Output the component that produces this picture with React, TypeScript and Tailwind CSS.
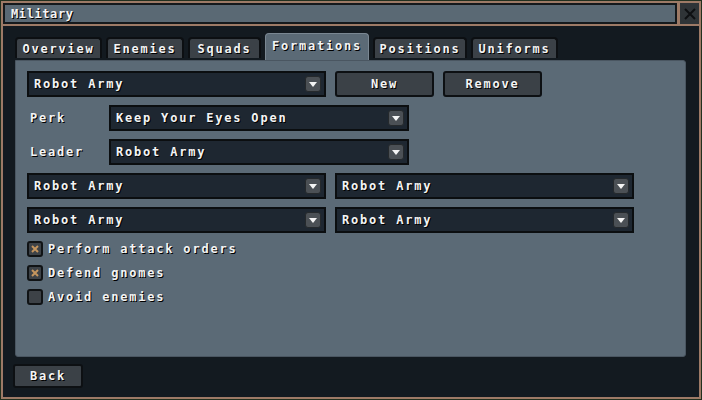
import React from 'react';

const font = "font-['DejaVu_Sans_Mono',monospace] font-bold text-[12px] tracking-[1.8px] text-[#f4f4f4] [text-shadow:1px_1px_0_#000]";

const Arrow = () => (
  <span className="ml-auto mr-[3px] flex h-[16px] w-[16px] items-center justify-center rounded-[3px] border border-[#25292c] bg-[#4b5055]">
    <svg width="8" height="5" viewBox="0 0 8 5">
      <path d="M0 0h8L4 5z" fill="#f4f4f4" />
    </svg>
  </span>
);

const Select = ({ value, w = 'w-[299px]' }: { value: string; w?: string }) => (
  <div className={`${w} flex h-[26px] items-center border-2 border-[#0b0e10] bg-[#1e2731] pl-[5px]`}>
    <span className={font}>{value}</span>
    <Arrow />
  </div>
);

const Button = ({ label, w }: { label: string; w: string }) => (
  <button className={`${w} flex items-center justify-center rounded-[3px] border-2 border-[#0d1013] bg-[#3b4147]`}>
    <span className={font}>{label}</span>
  </button>
);

const Check = ({ label, on }: { label: string; on?: boolean }) => (
  <div className="flex h-[16px] items-center gap-[5px]">
    <span className="flex h-[16px] w-[16px] items-center justify-center rounded-[3px] border-2 border-[#101315] bg-[#3d4247]">
      {on && (
        <svg width="8" height="8" viewBox="0 0 8 8">
          <path d="M1 1l6 6M7 1L1 7" stroke="#c4955e" strokeWidth="2" />
        </svg>
      )}
    </span>
    <span className={font}>{label}</span>
  </div>
);

const tabs = ['Overview', 'Enemies', 'Squads', 'Formations', 'Positions', 'Uniforms'];
const tabW = ['w-[87px]', 'w-[78px]', 'w-[73px]', 'w-[104px]', 'w-[94px]', 'w-[87px]'];

export default function App() {
  return (
    <div className="h-[400px] w-[702px] bg-[#22301f] p-px">
      <div className="flex h-full flex-col gap-[2px] bg-[#9d7a66] p-[2px]">
        {/* Title bar */}
        <div className="flex h-[21px] gap-[3px]">
          <div className="flex flex-1 items-center border-2 border-[#15191c] bg-[#5a6974] pl-[6px]">
            <span className="font-['DejaVu_Sans_Mono',monospace] text-[12px] font-bold tracking-[0.6px] text-[#f4f4f4] [text-shadow:1px_1px_0_#000]">
              Military
            </span>
          </div>
          <div className="flex w-[19px] items-center justify-center bg-[#2f3437]">
            <svg width="12" height="12" viewBox="0 0 12 12">
              <path d="M1 1l10 10M11 1L1 11" stroke="#0e1012" strokeWidth="2" />
            </svg>
          </div>
        </div>

        {/* Body */}
        <div className="flex flex-1 flex-col bg-[#131a20] pb-[6px] pl-[12px] pt-[7px]">
          <div className="flex h-[27px] items-end gap-[4px]">
            {tabs.map((t, i) =>
              t === 'Formations' ? (
                <div
                  key={t}
                  className={`${tabW[i]} flex h-[27px] items-start justify-center rounded-t-[4px] border-x border-t border-[#7a8792] bg-[#5b6a76] pt-[3px]`}
                >
                  <span className={font}>{t}</span>
                </div>
              ) : (
                <div
                  key={t}
                  className={`${tabW[i]} mb-[2px] flex h-[21px] items-center justify-center rounded-t-[4px] border-2 border-b-0 border-[#0c0f12] bg-[#3b4147]`}
                >
                  <span className={font}>{t}</span>
                </div>
              )
            )}
          </div>

          <div className="flex h-[297px] w-[671px] flex-col gap-[8px] rounded-b-[3px] rounded-tr-[3px] border border-[#4a5661] bg-[#5b6a76] pl-[11px] pt-[10px]">
            <div className="flex h-[26px] gap-[9px]">
              <Select value="Robot Army" />
              <Button label="New" w="w-[99px]" />
              <Button label="Remove" w="w-[99px]" />
            </div>
            <div className="flex items-center">
              <span className={`${font} w-[82px] pl-[3px]`}>Perk</span>
              <Select value="Keep Your Eyes Open" w="w-[300px]" />
            </div>
            <div className="flex items-center">
              <span className={`${font} w-[82px] pl-[3px]`}>Leader</span>
              <Select value="Robot Army" w="w-[300px]" />
            </div>
            <div className="flex gap-[9px]">
              <Select value="Robot Army" />
              <Select value="Robot Army" />
            </div>
            <div className="flex gap-[9px]">
              <Select value="Robot Army" />
              <Select value="Robot Army" />
            </div>
            <Check label="Perform attack orders" on />
            <Check label="Defend gnomes" on />
            <Check label="Avoid enemies" />
          </div>

          <div className="mt-[7px] flex">
            <Button label="Back" w="w-[70px] h-[24px] -ml-[2px]" />
          </div>
        </div>
      </div>
    </div>
  );
}
